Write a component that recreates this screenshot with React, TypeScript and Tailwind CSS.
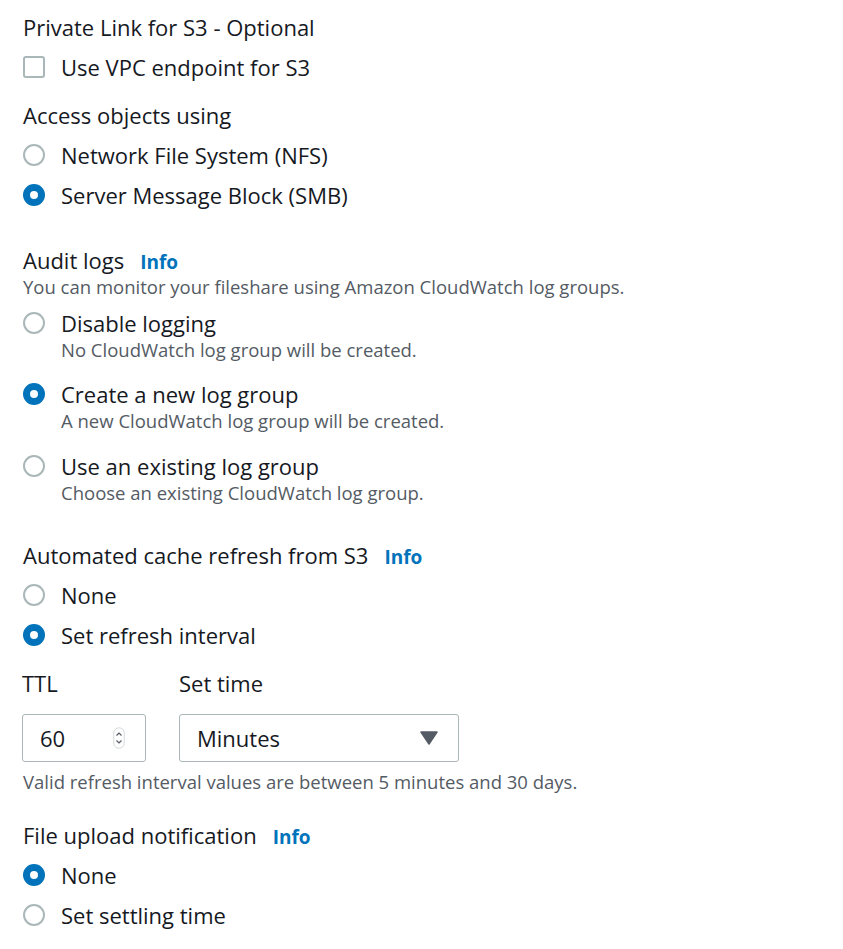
import type { ReactNode } from 'react';

const font = { fontFamily: '"Open Sans", "Liberation Sans", sans-serif' };

function Info({ className = '' }: { className?: string }) {
  return <span className={`text-[19px] font-bold text-[#0073bb] ${className}`}>Info</span>;
}

function Radio({ checked, label, desc, className = '' }: { checked?: boolean; label: string; desc?: string; className?: string }) {
  return (
    <div className={`flex ${className}`}>
      <div className="h-[28px] flex items-center">
        {checked ? (
          <span className="w-[22px] h-[22px] rounded-full border-[7px] border-[#0073bb] bg-white" />
        ) : (
          <span className="w-[22px] h-[22px] rounded-full border-2 border-[#aab7b8] bg-white" />
        )}
      </div>
      <div className="ml-4">
        <div className="h-[28px] leading-[28px] text-[22px] text-[#16191f]">{label}</div>
        {desc && <div className="h-[26px] leading-[26px] text-[18.5px] text-[#545b64]">{desc}</div>}
      </div>
    </div>
  );
}

function Heading({ children, className = '' }: { children: ReactNode; className?: string }) {
  return <div className={`h-[28px] leading-[28px] text-[22px] text-[#16191f] flex items-baseline ${className}`}>{children}</div>;
}

export default function App() {
  return (
    <div className="w-[843px] h-[949px] bg-white pl-[23px] pt-[13px]" style={font}>
      <Heading>Private Link for S3 - Optional</Heading>
      <div className="flex mt-[12px] h-[28px] items-center">
        <span className="w-[22px] h-[22px] rounded-[3px] border-2 border-[#aab7b8]" />
        <span className="ml-4 text-[22px] leading-[28px] text-[#16191f]">Use VPC endpoint for S3</span>
      </div>

      <Heading className="mt-[20px]">Access objects using</Heading>
      <Radio className="mt-[12px]" label="Network File System (NFS)" />
      <Radio className="mt-[12px]" checked label="Server Message Block (SMB)" />

      <Heading className="mt-[37px]">
        Audit logs <Info className="ml-4" />
      </Heading>
      <div className="h-[26px] leading-[26px] text-[18.5px] text-[#545b64]">
        You can monitor your fileshare using Amazon CloudWatch log groups.
      </div>
      <Radio className="mt-[9px]" label="Disable logging" desc="No CloudWatch log group will be created." />
      <Radio className="mt-[17px]" checked label="Create a new log group" desc="A new CloudWatch log group will be created." />
      <Radio className="mt-[18px]" label="Use an existing log group" desc="Choose an existing CloudWatch log group." />

      <Heading className="mt-[35px]">
        Automated cache refresh from S3 <Info className="ml-4" />
      </Heading>
      <Radio className="mt-[12px]" label="None" />
      <Radio className="mt-[12px]" checked label="Set refresh interval" />

      <div className="flex mt-[20px] -ml-px">
        <div className="w-[124px]">
          <Heading>TTL</Heading>
          <div className="mt-[17px] h-[48px] border-[1.5px] border-[#aab7b8] rounded-[3px] flex items-center pl-[17px] pr-[20px] justify-between">
            <span className="text-[22px] text-[#16191f]">60</span>
            <svg width="12" height="22" viewBox="0 0 12 22" fill="none">
              <rect x="0.75" y="0.75" width="10.5" height="20.5" rx="5.25" stroke="#d5dbdb" strokeWidth="1" />
              <path d="M3.5 8.5 L6 6 L8.5 8.5" stroke="#545b64" strokeWidth="1.2" />
              <path d="M3.5 13.5 L6 16 L8.5 13.5" stroke="#545b64" strokeWidth="1.2" />
            </svg>
          </div>
        </div>
        <div className="ml-[33px] w-[280px]">
          <Heading>Set time</Heading>
          <div className="mt-[17px] h-[48px] border-[1.5px] border-[#aab7b8] rounded-[3px] flex items-center pl-[17px] pr-[20px] justify-between">
            <span className="text-[22px] text-[#16191f]">Minutes</span>
            <svg width="18" height="14" viewBox="0 0 18 14">
              <path d="M1 1 H17 L9 13 Z" fill="#545b64" stroke="#545b64" strokeWidth="1.5" strokeLinejoin="round" />
            </svg>
          </div>
        </div>
      </div>
      <div className="mt-[7px] h-[26px] leading-[26px] text-[18.5px] text-[#545b64]">
        Valid refresh interval values are between 5 minutes and 30 days.
      </div>

      <Heading className="mt-[26px]">
        File upload notification <Info className="ml-4" />
      </Heading>
      <Radio className="mt-[12px]" checked label="None" />
      <Radio className="mt-[12px]" label="Set settling time" />
    </div>
  );
}
